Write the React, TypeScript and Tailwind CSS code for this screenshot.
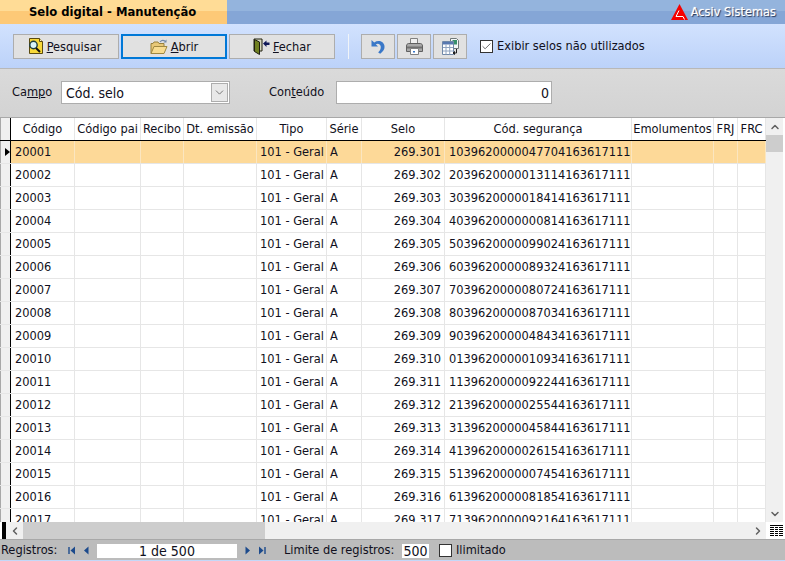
import React from 'react';
import { ChevronDown, ChevronLeft, ChevronRight, ChevronUp, Check } from 'lucide-react';

const columns = [
  { label: 'Código', w: 'w-[64px]' },
  { label: 'Código pai', w: 'w-[66px]' },
  { label: 'Recibo', w: 'w-[43px]' },
  { label: 'Dt. emissão', w: 'w-[73px]' },
  { label: 'Tipo', w: 'w-[70px]' },
  { label: 'Série', w: 'w-[35px]' },
  { label: 'Selo', w: 'w-[83px]' },
  { label: 'Cód. segurança', w: 'w-[187px]' },
  { label: 'Emolumentos', w: 'w-[82px]' },
  { label: 'FRJ', w: 'w-[24px]' },
  { label: 'FRC', w: 'w-[28px]' },
];

const codes = [
  '1039620000047704163617111',
  '2039620000013114163617111',
  '3039620000018414163617111',
  '4039620000000814163617111',
  '5039620000099024163617111',
  '6039620000089324163617111',
  '7039620000080724163617111',
  '8039620000087034163617111',
  '9039620000048434163617111',
  '0139620000010934163617111',
  '1139620000092244163617111',
  '2139620000025544163617111',
  '3139620000045844163617111',
  '4139620000026154163617111',
  '5139620000007454163617111',
  '6139620000081854163617111',
  '7139620000092164163617111',
];

const SearchDocIcon = () => (
  <svg width="17" height="17" viewBox="0 0 17 17">
    <path d="M2.500 .5h10l3 3v12h-13z" fill="#f8d838" stroke="#5a4a10" />
    <path d="M12.500 .5v3h3" fill="#fff8c0" stroke="#5a4a10" />
    <circle cx="6.500" cy="7" r="3.700" fill="#d8f4f8" stroke="#1c3c3c" strokeWidth="1.400" />
    <path d="M9 10l4 4" stroke="#101010" strokeWidth="2" />
  </svg>
);

const FolderIcon = () => (
  <svg width="18" height="16" viewBox="0 0 18 16">
    <path d="M1 14.500V4.500h2l1-1.500h4l1 1.500h5v3" fill="#e8c878" stroke="#98803c" />
    <path d="M1 14.500l3-7h13l-3 7z" fill="#f8dc90" stroke="#a08840" />
    <path d="M10 3c1.500-2 3.500-2 5-1" fill="none" stroke="#7088a8" strokeWidth="1.200" />
    <path d="M16.500 .5v3h-3z" fill="#7088a8" />
  </svg>
);

const DoorIcon = () => (
  <svg width="17" height="17" viewBox="0 0 17 17">
    <path d="M1 1h8v12H1z" fill="#d8d8c0" stroke="#202010" />
    <path d="M1.500 1.500l5 2.500v12.500l-5-3z" fill="#708020" stroke="#202010" />
    <path d="M10 5.500l3.500-3v2h3v2.500h-3v2z" fill="#101858" />
  </svg>
);

const UndoIcon = () => (
  <svg width="14" height="15" viewBox="0 0 14 15">
    <path d="M.5 1v6.500H7L4.800 5.300C7 3.800 9.800 5.200 9.800 8c0 2.500-1.300 4-2.600 5.500l2 1.200C12 12.500 14 10 13.500 7 12.800 2.500 7.500.5 3.200 3.500z" fill="#3a78c8" />
  </svg>
);

const PrinterIcon = () => (
  <svg width="17" height="17" viewBox="0 0 17 17">
    <path d="M4.500 .5h7v6h-7z" fill="#f0f0f0" stroke="#808080" />
    <path d="M.5 8c0-1.500 1-2.500 2-2.500h12c1 0 2 1 2 2.500v5.500h-16z" fill="#a8a8a8" stroke="#606060" />
    <path d="M1 8.500h15v2H1z" fill="#707070" />
    <path d="M4.500 10.500h8v6h-8z" fill="#fff" stroke="#808080" />
    <path d="M7 13h2v1.500H7z" fill="#3a78c8" />
  </svg>
);

const CalcIcon = () => (
  <svg width="17" height="17" viewBox="0 0 17 17">
    <path d="M8.500 .5h6l2 2v8h-8z" fill="#f4f8f8" stroke="#707878" />
    <rect x="10.500" y="2" width="4.500" height="4.500" fill="#38906c" />
    <path d="M.5 3.500h11v13H.5z" fill="#fff" stroke="#7088a8" />
    <path d="M1 4h10v2.500H1z" fill="#5878b0" />
    <path d="M1 9.500h10M1 13h10M4 6.500v10M7.700 6.500v10" stroke="#90a4c0" />
    <path d="M14.500 11v4h-2M12.500 13.500v3l-1.500-1.500z" fill="none" stroke="#202020" />
  </svg>
);

const LogoIcon = () => (
  <svg width="17" height="16" viewBox="0 0 17 16">
    <path d="M8.500 0L17 16H0z" fill="#f60000" />
    <path d="M8 6.500L5 12.500h7l1.500 3" fill="none" stroke="#fff" strokeWidth="1" />
  </svg>
);

const GridIcon = () => (
  <svg width="13" height="11" viewBox="0 0 13 11">
    <path d="M0 .5h13M0 2.500h13M0 4.500h13M0 6.500h13M0 8.500h13M0 10.500h13" stroke="#000" />
    <path d="M4.500 2v9M8.500 2v9" stroke="#fff" />
  </svg>
);

const FirstIcon = () => (
  <svg width="8" height="9" viewBox="0 0 8 9">
    <path d="M1 1v7" stroke="#1c4a8c" strokeWidth="1.400" />
    <path d="M7 .5v8L2.500 4.500z" fill="#1c4a8c" />
  </svg>
);
const PrevIcon = () => (
  <svg width="6" height="9" viewBox="0 0 6 9">
    <path d="M5.500 .5v8L1 4.500z" fill="#1c4a8c" />
  </svg>
);
const NextIcon = () => (
  <svg width="6" height="9" viewBox="0 0 6 9">
    <path d="M.5 .5v8L5 4.500z" fill="#1c4a8c" />
  </svg>
);
const LastIcon = () => (
  <svg width="8" height="9" viewBox="0 0 8 9">
    <path d="M1 .5v8L5.500 4.500z" fill="#1c4a8c" />
    <path d="M7 1v7" stroke="#1c4a8c" strokeWidth="1.400" />
  </svg>
);

const ToolButton: React.FC<{ focused?: boolean; icon: React.ReactNode; children: React.ReactNode }> = ({ focused, icon, children }) => (
  <button
    className={
      focused
        ? 'flex h-[25px] w-[106px] items-center justify-center gap-[3px] border-2 border-[#0078d7] bg-[#e1e1e1]'
        : 'flex h-[25px] w-[106px] items-center justify-center gap-[3px] border border-[#adadad] bg-[#e1e1e1]'
    }
  >
    {icon}
    <span className="pt-px">{children}</span>
  </button>
);

const IconButton: React.FC<{ children: React.ReactNode }> = ({ children }) => (
  <button className="flex h-[25px] w-[34px] items-center justify-center border border-[#adadad] bg-[#e1e1e1]">
    {children}
  </button>
);

const App: React.FC = () => {
  return (
    <div className="flex h-[561px] w-[785px] flex-col overflow-hidden bg-[#d8d8d8] font-['DejaVu_Sans_Condensed','DejaVu_Sans',sans-serif] text-[12.7px] leading-none text-[#101020]">
      {/* barra de titulo */}
      <div className="flex h-6 shrink-0 bg-[linear-gradient(#94b4dd_0,#94b4dd_46%,#85a6d6_46%,#85a6d6_100%)]">
        <div className="flex w-[227px] items-center bg-[linear-gradient(#ffdc96_0,#ffdc96_46%,#fdc977_46%,#fdc977_100%)] pl-[29px] text-[12.9px] font-bold text-black">
          Selo digital - Manutenção
        </div>
        <div className="ml-auto flex items-center gap-[3px] pr-[9px] text-white [text-shadow:1px_1px_1px_#203050,0_0_1px_#ffffff]">
          <LogoIcon />
          Acsiv Sistemas
        </div>
      </div>

      {/* toolbar */}
      <div className="flex h-[45px] shrink-0 items-center border-b border-[#b8b8b8] bg-linear-to-b from-[#d2e2fe] to-[#bcd2f9] pt-px pl-[13px]">
        <div className="flex gap-[2px]">
          <ToolButton icon={<SearchDocIcon />}>
            <span className="pr-[4px]">
              <u>P</u>esquisar
            </span>
          </ToolButton>
          <ToolButton focused icon={<FolderIcon />}>
            <u>A</u>brir
          </ToolButton>
          <ToolButton icon={<DoorIcon />}>
            <u>F</u>echar
          </ToolButton>
        </div>
        <div className="ml-[13px] h-[25px] w-px bg-[#f0f4f8]" />
        <div className="ml-3 flex gap-[2px]">
          <IconButton>
            <UndoIcon />
          </IconButton>
          <IconButton>
            <PrinterIcon />
          </IconButton>
          <IconButton>
            <CalcIcon />
          </IconButton>
        </div>
        <div className="ml-[13px] flex items-center gap-[4px]">
          <div className="flex h-[13px] w-[13px] items-center justify-center border border-[#333] bg-white">
            <Check size={11} strokeWidth={1.6} className="text-[#333]" />
          </div>
          Exibir selos não utilizados
        </div>
      </div>

      {/* filtro */}
      <div className="flex h-[48px] shrink-0 items-center bg-linear-to-b from-[#dadada] to-[#d3d3d3] pb-[2px] pl-3">
        <span className="w-[49px]">
          Ca<u>mp</u>o
        </span>
        <div className="flex h-[23px] w-[169px] items-center border border-[#adadad] bg-white pl-[4px] text-[14px]">
          <span className="pt-px">Cód. selo</span>
          <div className="mr-px ml-auto flex h-[19px] w-[17px] items-center justify-center border border-[#adadad] bg-[#e8e8e8]">
            <ChevronDown size={13} strokeWidth={1.4} className="text-[#555]" />
          </div>
        </div>
        <span className="ml-[39px] w-[67px]">
          Con<u>t</u>eúdo
        </span>
        <div className="flex h-[23px] w-[216px] items-center justify-end border border-[#adadad] bg-white pt-px pr-[2px] text-[14px]">0</div>
      </div>

      {/* grid */}
      <div className="flex min-h-0 flex-1 flex-col border-t border-[#a8a8a8] bg-white">
        <div className="flex min-h-0 flex-1">
          <div className="flex min-w-0 flex-1 flex-col overflow-hidden">
            <div className="flex h-[23px] shrink-0 border-b border-black">
              <div className="h-full w-[11px] shrink-0 border-r border-r-black border-l border-l-[#a8a8a8] bg-[#f0f0f0]" />
              {columns.map((c) => (
                <div key={c.label} className={`${c.w} flex shrink-0 items-center justify-center border-r border-[#e6e6e6] whitespace-nowrap`}>
                  {c.label}
                </div>
              ))}
            </div>
            {codes.map((code, i) => {
              const selected = i === 0;
              const cell = 'flex h-full shrink-0 items-center border-r pt-px';
              const border = selected ? ' border-[#fbe6c0]' : ' border-[#e6e6e6]';
              return (
                <div key={code} className={selected ? 'flex h-[23px] shrink-0 border-b border-[#e6e6e6] bg-[#fdd998]' : 'flex h-[23px] shrink-0 border-b border-[#e6e6e6] bg-white'}>
                  <div className="flex h-full w-[11px] shrink-0 items-center justify-end border-r border-r-black border-l border-l-[#a8a8a8] bg-[#f0f0f0]">
                    {selected && (
                      <svg width="5" height="8" viewBox="0 0 5 8">
                        <path d="M0 0l5 4-5 4z" fill="#000" />
                      </svg>
                    )}
                  </div>
                  <div className={`${cell}${border} w-[64px] pl-[4px]`}>{20001 + i}</div>
                  <div className={`${cell}${border} w-[66px]`} />
                  <div className={`${cell}${border} w-[43px]`} />
                  <div className={`${cell}${border} w-[73px]`} />
                  <div className={`${cell}${border} w-[70px] pl-[3px] whitespace-nowrap`}>101 - Geral</div>
                  <div className={`${cell}${border} w-[35px] pl-[3px]`}>A</div>
                  <div className={`${cell}${border} w-[83px] justify-end pr-[3px]`}>{(269301 + i).toLocaleString('pt-BR')}</div>
                  <div className={`${cell}${border} w-[187px] pl-[4px]`}>{code}</div>
                  <div className={`${cell}${border} w-[82px]`} />
                  <div className={`${cell}${border} w-[24px]`} />
                  <div className={`${cell}${border} w-[28px]`} />
                </div>
              );
            })}
          </div>

          {/* scrollbar vertical */}
          <div className="flex w-[19px] shrink-0 flex-col border-r-2 border-white bg-[#f0f0f0]">
            <div className="flex h-[17px] items-center justify-center">
              <ChevronUp size={12} strokeWidth={3} className="text-[#606060]" />
            </div>
            <div className="h-[17px] bg-[#cdcdcd]" />
            <div className="mt-auto flex h-[17px] items-center justify-center">
              <ChevronDown size={12} strokeWidth={3} className="text-[#606060]" />
            </div>
          </div>
        </div>

        {/* scrollbar horizontal */}
        <div className="flex h-[18px] shrink-0 border-b border-[#a8a8a8] bg-white">
          <div className="ml-[2px] w-[4px] bg-black" />
          <div className="flex w-[17px] items-center justify-center bg-[#f0f0f0]">
            <ChevronLeft size={12} strokeWidth={3} className="text-[#606060]" />
          </div>
          <div className="w-[242px] bg-[#cdcdcd]" />
          <div className="flex flex-1 items-center justify-end bg-[#f0f0f0] pr-[2px]">
            <ChevronRight size={12} strokeWidth={3} className="text-[#606060]" />
          </div>
          <div className="flex w-[19px] items-center pl-[4px]">
            <GridIcon />
          </div>
        </div>
      </div>

      {/* rodape */}
      <div className="flex h-[21px] shrink-0 items-center border-b border-[#c4d8f8] bg-[#bcbcbc] pt-px pl-px">
        <span className="w-[67px]">Registros:</span>
        <FirstIcon />
        <span className="ml-[7px]">
          <PrevIcon />
        </span>
        <div className="ml-[8px] flex h-[14px] w-[140px] items-center justify-center bg-white text-[14px]">1 de 500</div>
        <span className="ml-[8px]">
          <NextIcon />
        </span>
        <span className="ml-[7px]">
          <LastIcon />
        </span>
        <span className="ml-[18px] w-[118px]">Limite de registros:</span>
        <div className="flex h-[14px] w-[27px] items-center justify-center bg-white text-[14px]">500</div>
        <div className="ml-[10px] h-[13px] w-[13px] border border-[#333] bg-white" />
        <span className="ml-[4px]">Ilimitado</span>
      </div>
    </div>
  );
};

export default App;
